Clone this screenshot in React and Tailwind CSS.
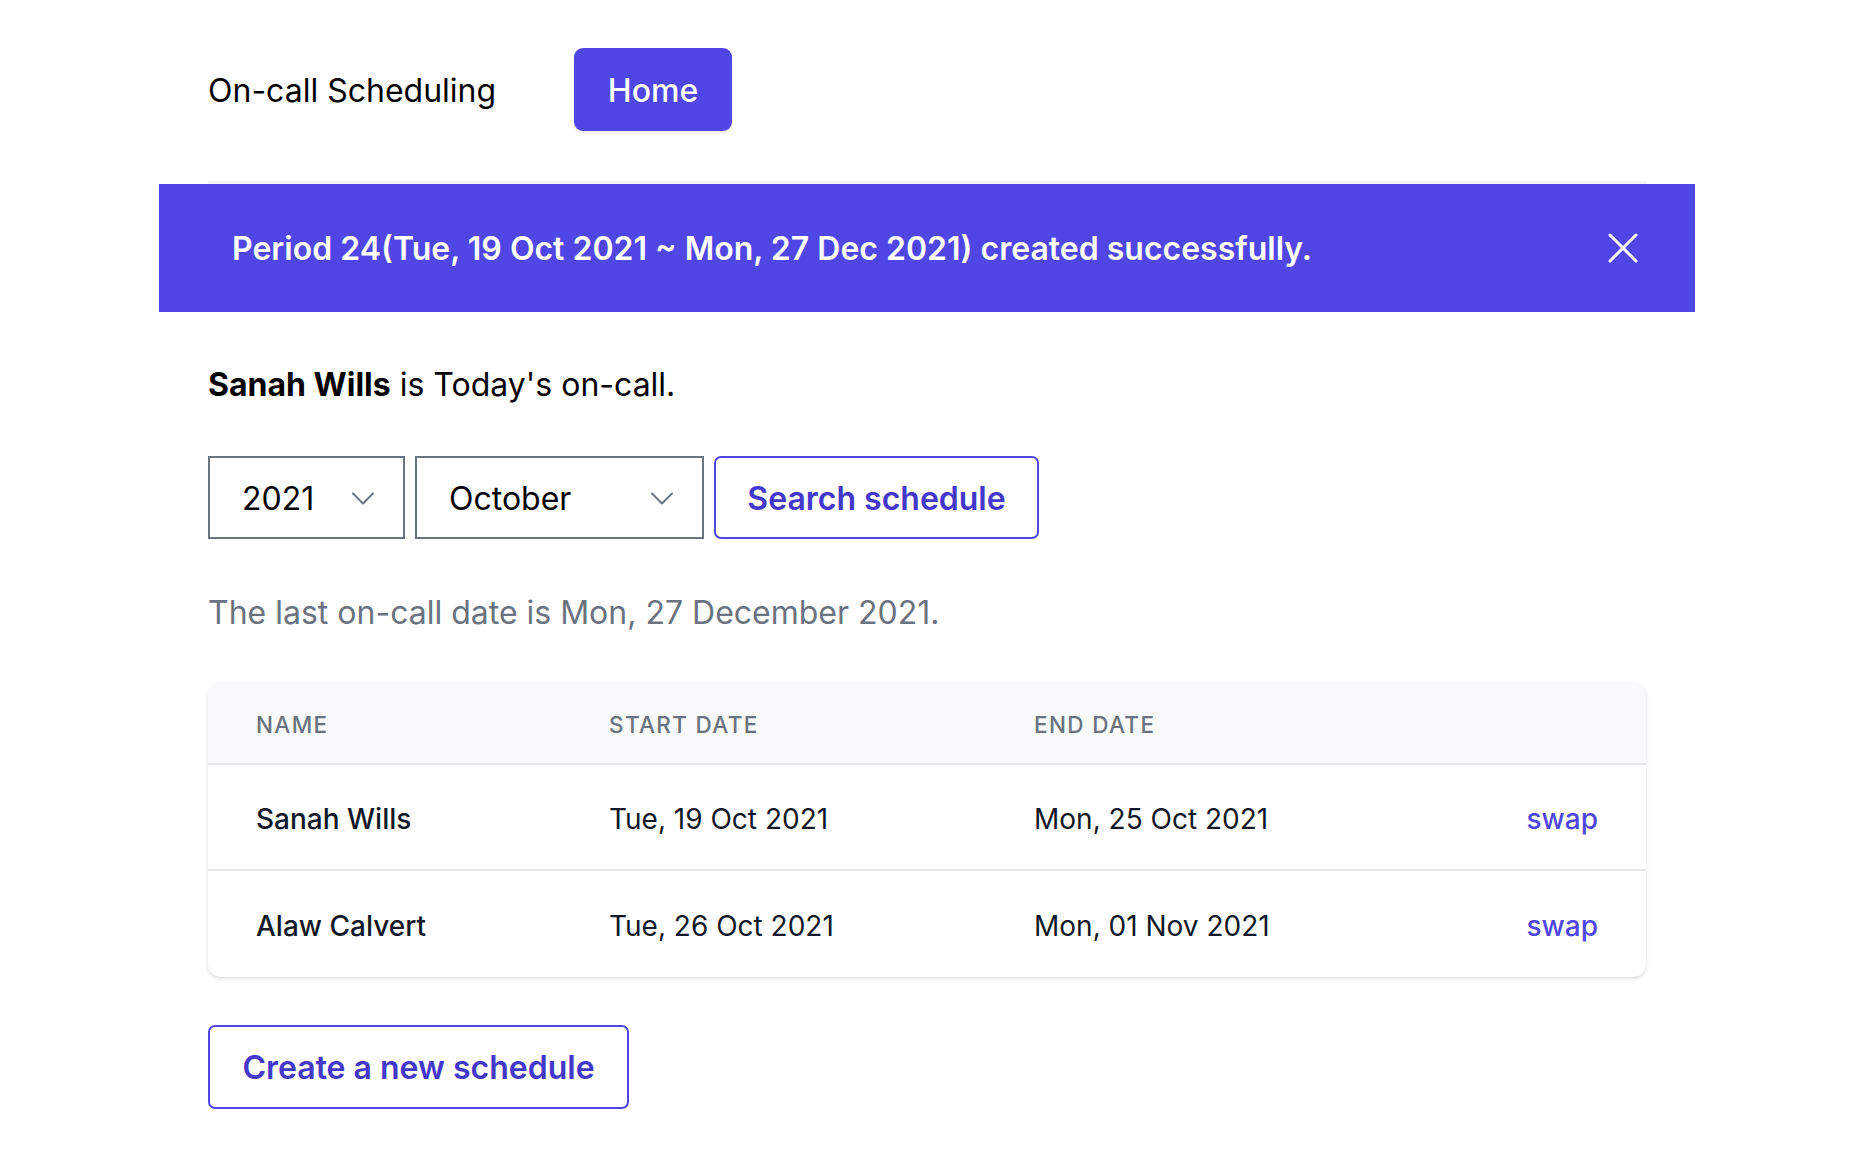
import React from "react";

function Chevron() {
  return (
    <svg width="24" height="24" viewBox="0 0 24 24" fill="none" className="shrink-0">
      <path d="M2 7.5l10 10 10-10" stroke="#6b7280" strokeWidth="2" strokeLinecap="round" strokeLinejoin="round" />
    </svg>
  );
}

const rows = [
  { name: "Sanah Wills", start: "Tue, 19 Oct 2021", end: "Mon, 25 Oct 2021" },
  { name: "Alaw Calvert", start: "Tue, 26 Oct 2021", end: "Mon, 01 Nov 2021" },
];

export default function App() {
  return (
    <div className="min-h-[1158px] bg-white" style={{ fontFamily: "Inter, 'Noto Sans', sans-serif" }}>
      <div className="w-[1536px] mx-auto">
        <div className="px-[49px]">
          <div className="flex items-center pt-[48px] pb-[50px] border-b-[3px] border-[#f3f4f6]">
            <div className="w-[366px] pt-[2px] text-[32px] leading-[48px] text-black">On-call Scheduling</div>
            <button className="h-[83px] w-[158px] rounded-[9px] bg-[#4f46e5] pt-[2px] text-white text-[32px] font-medium shadow-[0_1.5px_3px_rgba(0,0,0,0.08)]">
              Home
            </button>
          </div>
        </div>

        <div className="h-[128px] bg-[#4f46e5] flex items-center justify-between pl-[73px] pr-[57px]">
          <div className="pt-[2px] text-white text-[32px] font-semibold leading-[48px]">
            Period 24(Tue, 19 Oct 2021 ~ Mon, 27 Dec 2021) created successfully.
          </div>
          <svg width="30" height="30" viewBox="0 0 30 30" fill="none">
            <path d="M2 2L28 28M28 2L2 28" stroke="white" strokeWidth="3" strokeLinecap="round" />
          </svg>
        </div>

        <div className="px-[49px]">
          <p className="mt-[49px] text-[32px] leading-[48px] text-black">
            <span className="font-bold">Sanah Wills</span> is Today's on-call.
          </p>

          <div className="mt-[47px] flex gap-[10px]">
            <div className="h-[83px] w-[197px] border-2 border-[#6b7280] flex items-center justify-between pl-[32px] pr-[28px] text-[32px] text-black">
              <span className="pt-[2px]">2021</span>
              <Chevron />
            </div>
            <div className="h-[83px] w-[289px] border-2 border-[#6b7280] flex items-center justify-between pl-[32px] pr-[28px] text-[32px] text-black">
              <span className="pt-[2px]">October</span>
              <Chevron />
            </div>
            <button className="h-[83px] w-[325px] border-2 border-[#4f46e5] rounded-[7px] pt-[2px] text-[32px] font-semibold text-[#4338ca]">
              Search schedule
            </button>
          </div>

          <p className="mt-[50px] text-[32px] leading-[48px] text-[#6b7280]">
            The last on-call date is Mon, 27 December 2021.
          </p>

          <div className="mt-[46px] rounded-[13px] overflow-hidden bg-white shadow-[0_1.5px_4.5px_0_rgba(0,0,0,0.1),0_1.5px_3px_-1.5px_rgba(0,0,0,0.1)]">
            <div className="h-[82px] bg-[#f9fafb] flex items-center px-[48px] pt-[4px] text-[22.5px] font-medium tracking-[0.06em] text-[#6b7280] border-b-2 border-[#e5e7eb]">
              <div className="w-[353px]">NAME</div>
              <div className="w-[425px]">START DATE</div>
              <div>END DATE</div>
            </div>
            {rows.map((r, i) => (
              <div
                key={r.name}
                className={`h-[106px] flex items-center px-[48px] pt-[3px] text-[28px] ${i === 0 ? "border-b-2 border-[#e5e7eb]" : ""}`}
              >
                <div className="w-[353px] font-medium text-[#111827]">{r.name}</div>
                <div className="w-[425px] text-[#111827]">{r.start}</div>
                <div className="flex-1 text-[#111827]">{r.end}</div>
                <div className="font-medium text-[#4f46e5]">swap</div>
              </div>
            ))}
          </div>

          <button className="mt-[48px] h-[84px] w-[421px] border-2 border-[#4f46e5] rounded-[7px] pt-[2px] text-[32px] font-semibold text-[#4338ca]">
            Create a new schedule
          </button>
        </div>
      </div>
    </div>
  );
}
